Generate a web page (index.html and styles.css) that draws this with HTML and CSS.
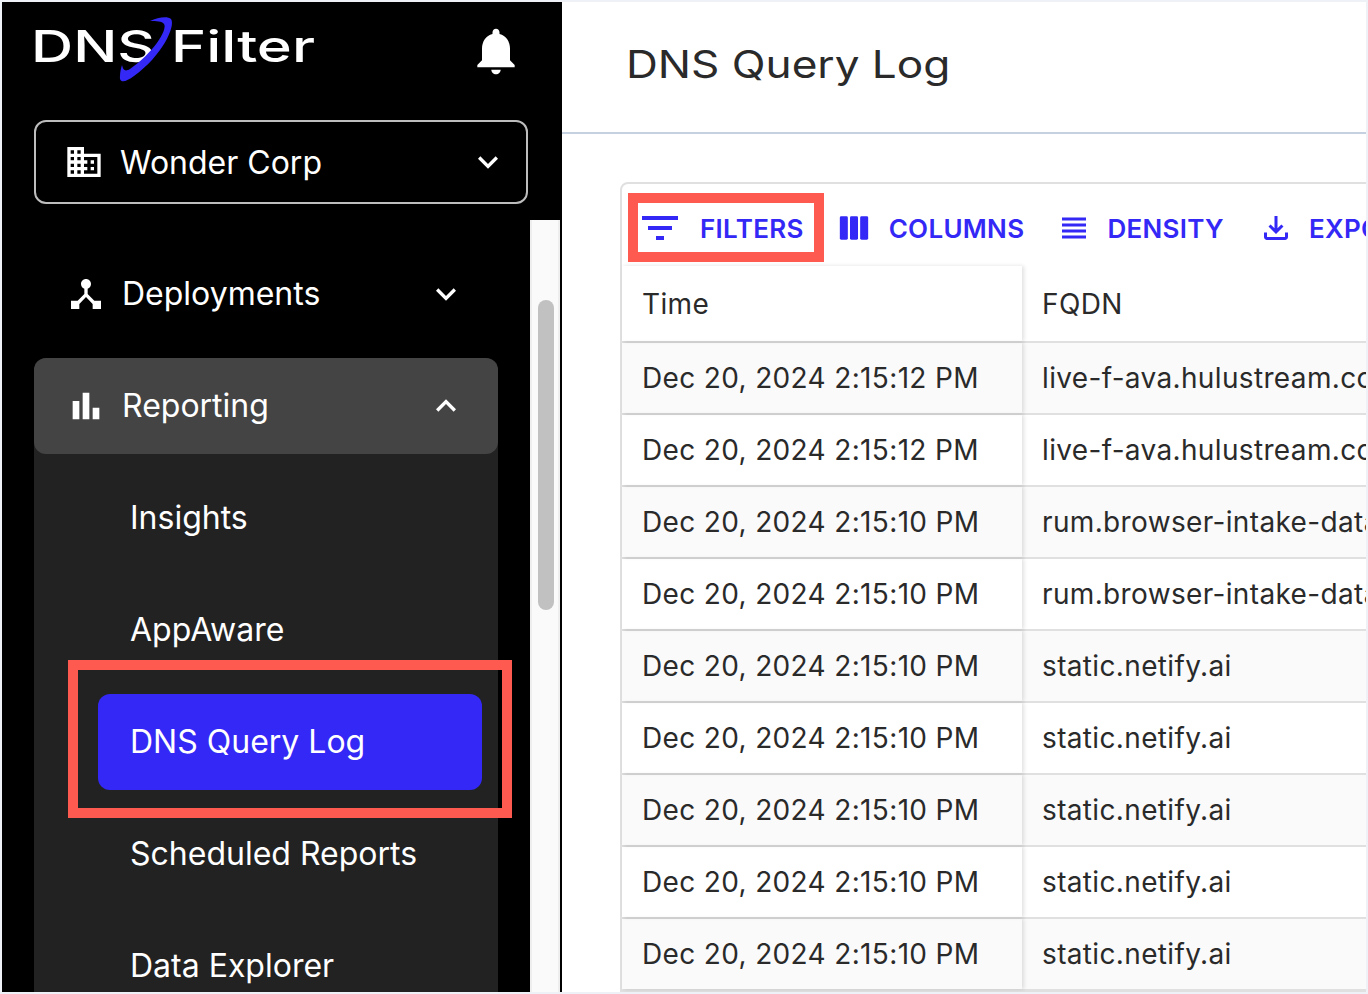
FILE: index.html
```html
<!DOCTYPE html>
<html lang="en">
<head>
<meta charset="utf-8">
<title>DNS Query Log</title>
<link rel="stylesheet" href="styles.css">
</head>
<body>
<div class="frame">
  <aside class="sidebar">
    <div class="side-head">
      <div class="logo-row">
        <svg class="logo" viewBox="0 0 300 80" aria-label="DNSFilter">
          <text class="logo-text" x="-3" y="44" textLength="124" lengthAdjust="spacingAndGlyphs">DNS</text>
          <text class="logo-text logo-thin" x="137" y="44" textLength="144" lengthAdjust="spacingAndGlyphs">Filter</text>
          <path class="logo-swoosh" d="M116 3C124-1 134-2 137 1C142 8 128 38 100 58C92 64 85 66 86 58C86 54 87 50 88 47C89 52 91 54 96 51C118 36 134 12 130 6C128 3 122 3 116 3Z"/>
        </svg>
        <svg class="ico-bell" viewBox="0 0 24 24"><path d="M12 22c1.1 0 2-.9 2-2h-4c0 1.1.89 2 2 2zm6-6v-5c0-3.07-1.64-5.64-4.5-6.32V4c0-.83-.67-1.5-1.5-1.5s-1.5.67-1.5 1.5v.68C7.63 5.36 6 7.92 6 11v5l-2 2v1h16v-1l-2-2z"/></svg>
      </div>
      <div class="org-select">
        <svg class="ico" viewBox="0 0 24 24"><path d="M12 7V3H2v18h20V7H12zM6 19H4v-2h2v2zm0-4H4v-2h2v2zm0-4H4V9h2v2zm0-4H4V5h2v2zm4 12H8v-2h2v2zm0-4H8v-2h2v2zm0-4H8V9h2v2zm0-4H8V5h2v2zm10 12h-8v-2h2v-2h-2v-2h2v-2h-2V9h8v10zm-2-8h-2v2h2v-2zm0 4h-2v2h2v-2z"/></svg>
        <span class="org-name">Wonder Corp</span>
        <svg class="ico" viewBox="0 0 24 24"><path d="M16.59 8.59 12 13.17 7.41 8.59 6 10l6 6 6-6z"/></svg>
      </div>
    </div>
    <div class="side-body">
      <nav class="nav">
        <div class="nav-item">
          <svg class="ico" viewBox="0 0 24 24"><path d="M17 16l-4-4V8.82C14.16 8.4 15 7.3 15 6c0-1.66-1.34-3-3-3S9 4.34 9 6c0 1.3.84 2.4 2 2.82V12l-4 4H3v5h5v-3.05l4-4.2 4 4.2V21h5v-5h-4z"/></svg>
          <span class="nav-label">Deployments</span>
          <svg class="ico" viewBox="0 0 24 24"><path d="M16.59 8.59 12 13.17 7.41 8.59 6 10l6 6 6-6z"/></svg>
        </div>
        <div class="nav-group">
          <div class="nav-item nav-item-open">
            <svg class="ico" viewBox="0 0 24 24"><path d="M4 9h4v11H4zm12 4h4v7h-4zm-6-9h4v16h-4z"/></svg>
            <span class="nav-label">Reporting</span>
            <svg class="ico" viewBox="0 0 24 24"><path d="M12 8l-6 6 1.41 1.41L12 10.83l4.59 4.58L18 14z"/></svg>
          </div>
          <div class="sub-list">
            <div class="sub-item">Insights</div>
            <div class="sub-item">AppAware</div>
            <div class="sub-item sub-active">DNS Query Log</div>
            <div class="sub-item">Scheduled Reports</div>
            <div class="sub-item">Data Explorer</div>
          </div>
        </div>
      </nav>
      <div class="track"><div class="thumb"></div></div>
    </div>
  </aside>
  <main class="main">
    <header class="page-head"><h1 class="page-title">DNS Query Log</h1></header>
    <div class="page-body">
      <section class="grid">
        <div class="toolbar">
          <button class="tool tool-filter"><svg class="t-ico t-48" viewBox="0 0 24 24"><path d="M10 18h4v-2h-4v2zM3 6v2h18V6H3zm3 7h12v-2H6v2z"/></svg>FILTERS</button>
          <button class="tool tool-columns"><svg class="t-ico t-40" viewBox="0 0 24 24"><rect x="3.5" y="5" width="4.8" height="14" rx=".8"/><rect x="9.6" y="5" width="4.8" height="14" rx=".8"/><rect x="15.7" y="5" width="4.8" height="14" rx=".8"/></svg>COLUMNS</button>
          <button class="tool tool-density"><svg class="t-ico t-36" viewBox="0 0 24 24"><path d="M4 15h16v-2H4v2zm0 4h16v-2H4v2zm0-8h16V9H4v2zm0-6v2h16V5H4z"/></svg>DENSITY</button>
          <button class="tool tool-export"><svg class="t-ico t-36" viewBox="0 0 24 24"><path d="M18 15v3H6v-3H4v3c0 1.1.9 2 2 2h12c1.1 0 2-.9 2-2v-3h-2zm-1-4-1.41-1.41L13 12.17V4h-2v8.17L8.41 9.59 7 11l5 5 5-5z"/></svg>EXPORT</button>
        </div>
        <div class="row row-head"><div class="cell cell-time">Time</div><div class="cell">FQDN</div></div>
        <div class="rows">
          <div class="row"><div class="cell cell-time">Dec 20, 2024 2:15:12 PM</div><div class="cell">live-f-ava.hulustream.com</div></div>
          <div class="row"><div class="cell cell-time">Dec 20, 2024 2:15:12 PM</div><div class="cell">live-f-ava.hulustream.com</div></div>
          <div class="row"><div class="cell cell-time">Dec 20, 2024 2:15:10 PM</div><div class="cell">rum.browser-intake-datadoghq.com</div></div>
          <div class="row"><div class="cell cell-time">Dec 20, 2024 2:15:10 PM</div><div class="cell">rum.browser-intake-datadoghq.com</div></div>
          <div class="row"><div class="cell cell-time">Dec 20, 2024 2:15:10 PM</div><div class="cell">static.netify.ai</div></div>
          <div class="row"><div class="cell cell-time">Dec 20, 2024 2:15:10 PM</div><div class="cell">static.netify.ai</div></div>
          <div class="row"><div class="cell cell-time">Dec 20, 2024 2:15:10 PM</div><div class="cell">static.netify.ai</div></div>
          <div class="row"><div class="cell cell-time">Dec 20, 2024 2:15:10 PM</div><div class="cell">static.netify.ai</div></div>
          <div class="row"><div class="cell cell-time">Dec 20, 2024 2:15:10 PM</div><div class="cell">static.netify.ai</div></div>
        </div>
      </section>
    </div>
  </main>
  <div class="mark mark-nav"></div>
  <div class="mark mark-filter"></div>
</div>
</body>
</html>
```
FILE: styles.css
```css
* { box-sizing: border-box; }
html, body { margin: 0; height: 100%; overflow: hidden; }
body { background: #eef2f7; font-family: Inter, "Liberation Sans", sans-serif; }

.frame {
  position: relative;
  display: flex;
  width: 1364px;
  height: 990px;
  margin: 2px;
  overflow: hidden;
  background: #fff;
}

/* Sidebar */
.sidebar {
  flex: none;
  display: flex;
  flex-direction: column;
  width: 560px;
  background: #000;
  color: #fff;
}
.side-head { flex: none; height: 218px; padding: 0 34px 0 32px; }
.logo-row {
  display: flex;
  align-items: center;
  justify-content: space-between;
  height: 98px;
  padding-right: 4px;
  margin-bottom: 20px;
}
.logo { display: block; width: 300px; height: 80px; margin-top: 14px; overflow: visible; }
.logo-text { font-family: Inter, sans-serif; font-size: 44px; font-weight: 500; fill: #fff; }
.logo-thin { font-weight: 500; }
.logo-swoosh { fill: #3328f5; }
.ico-bell { width: 56px; height: 56px; fill: #fff; }
.ico { flex: none; width: 40px; height: 40px; fill: #fff; }
.org-select {
  display: flex;
  align-items: center;
  height: 84px;
  padding: 0 18px 0 28px;
  border: 2px solid #bdbdbd;
  border-radius: 12px;
}
.org-name {
  flex: 1;
  margin-left: 16px;
  font-size: 32px;
}
.side-body { flex: 1; display: flex; min-height: 0; padding-right: 2px; }
.nav { flex: 1; min-width: 0; padding: 26px 32px 0; overflow: hidden; }
.nav-item {
  display: flex;
  align-items: center;
  height: 96px;
  padding: 0 32px;
  border-radius: 12px;
}
.nav-label {
  flex: 1;
  margin-left: 16px;
  padding-bottom: 1px;
  font-size: 32px;
}
.nav-group { margin-top: 16px; background: #222; border-radius: 12px 12px 0 0; }
.nav-item-open { background: #444; }
.sub-list { display: flex; flex-direction: column; gap: 16px; padding: 16px 16px 0 64px; }
.sub-item {
  flex: none;
  display: flex;
  align-items: center;
  height: 96px;
  padding: 0 0 1px 32px;
  border-radius: 12px;
  font-size: 32px;
}
.sub-active { background: #3328f5; }
.track {
  flex: none;
  width: 30px;
  padding: 80px 6px 0 6px;
  background: #fafafa;
  border-left: 2px solid #eee;
  border-right: 2px solid #eee;
}
.thumb { width: 16px; height: 310px; background: #c1c1c1; border-radius: 8px; }

/* Main */
.main { flex: 1; min-width: 0; overflow: hidden; display: flex; flex-direction: column; }
.page-head {
  flex: none;
  display: flex;
  align-items: center;
  height: 132px;
  padding: 0 0 6px 64px;
  border-bottom: 2px solid #c5d0e0;
}
.page-title {
  margin: 0;
  font-size: 38.5px;
  font-weight: 400;
  color: #2a2a2a;
  transform: scaleX(1.146);
  transform-origin: left center;
}
.page-body { flex: 1; padding: 48px 0 0 58px; overflow: hidden; }
.grid {
  width: 1000px;
  border: 2px solid #e0e0e0;
  border-radius: 8px 0 0 0;
  background: #fff;
}
.toolbar { display: flex; align-items: center; gap: 32px; height: 82px; padding: 6px 0 0 14px; }
.tool {
  flex: none;
  display: flex;
  align-items: center;
  gap: 15px;
  padding: 0;
  border: 0;
  background: none;
  font-family: inherit;
  font-size: 26px;
  font-weight: 600;
  letter-spacing: .3px;
  color: #3328f5;
}
.tool-filter { gap: 16px; }
.tool-columns { margin-left: -2px; }
.tool-export { margin-left: 2px; }
.t-ico { flex: none; fill: #3328f5; }
.t-48 { width: 48px; height: 48px; }
.t-40 { width: 40px; height: 40px; }
.t-36 { width: 36px; height: 36px; }
.row {
  display: flex;
  height: 72px;
  border-bottom: 2px solid #e0e0e0;
  color: #2a2a2a;
  font-size: 28px;
  letter-spacing: .35px;
}
.row-head { height: 77px; background: #fff; }
.rows .row:nth-child(odd) { background: #fafafa; }
.cell { display: flex; align-items: center; padding-left: 20px; white-space: nowrap; }
.cell-time { position: relative; flex: none; width: 400px; box-shadow: 2px 0 4px rgba(0, 0, 0, .12); }

/* Red annotation boxes */
.mark { position: absolute; border: 10px solid #ff5a4f; pointer-events: none; }
.mark-nav { left: 66px; top: 658px; width: 444px; height: 158px; }
.mark-filter { left: 626px; top: 191px; width: 196px; height: 69px; }
```
